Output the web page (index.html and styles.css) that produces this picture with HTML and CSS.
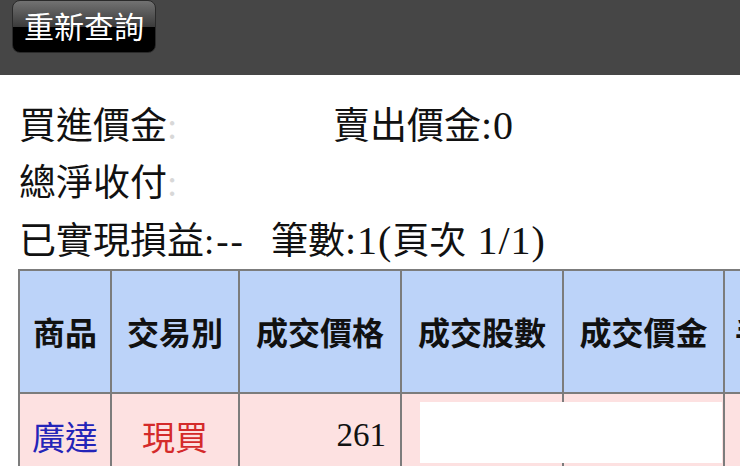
FILE: index.html
```html
<!DOCTYPE html>
<html lang="zh-Hant">
<head>
<meta charset="utf-8">
<title>查詢</title>
<link rel="stylesheet" href="styles.css">
</head>
<body>
<div class="topbar">
  <button class="btn">重新查詢</button>
</div>
<div class="info">
  <div class="line">
    <span class="item-buy">買進價金<span class="faint">:</span></span><span>賣出價金<span class="lat">:0</span></span>
  </div>
  <div class="line">總淨收付<span class="faint">:</span></div>
  <div class="line">已實現損益<span class="wide">:--</span><span class="gap"></span>筆數<span class="lat">:1(</span>頁次<span class="lat"> 1/1)</span></div>
</div>
<div class="table-wrap">
  <table class="grid">
    <thead>
      <tr>
        <th class="c1">商品</th>
        <th class="c2">交易別</th>
        <th class="c3">成交價格</th>
        <th class="c4">成交股數</th>
        <th class="c5">成交價金</th>
        <th class="c6">手續費</th>
      </tr>
    </thead>
    <tbody>
      <tr>
        <td class="name">廣達</td>
        <td class="type">現買</td>
        <td class="num">261</td>
        <td class="num"></td>
        <td class="num"></td>
        <td class="num"></td>
      </tr>
    </tbody>
  </table>
  <div class="mask"></div>
</div>
</body>
</html>
```
FILE: styles.css
```css
html, body {
  margin: 0;
  padding: 0;
  background: #ffffff;
  overflow: hidden;
  width: 740px;
  height: 466px;
}
body {
  font-family: "Liberation Serif", "Noto Sans CJK TC", serif;
  color: #111;
}
.topbar {
  height: 75px;
  background: #464646;
  padding-left: 12px;
  box-sizing: border-box;
}
.btn {
  display: block;
  width: 144px;
  height: 53px;
  margin: 0;
  padding: 0 0 3px 0;
  border: 1px solid #2a2a2a;
  border-radius: 8px;
  background: linear-gradient(to bottom, #727272 0%, #3c3c3c 50%, #000 51%, #000 100%);
  color: #ffffff;
  font-family: "Noto Sans CJK TC", sans-serif;
  font-size: 30px;
  box-sizing: border-box;
}
.info {
  padding: 22px 0 0 19px;
  font-size: 37px;
}
.line {
  height: 57.5px;
  line-height: 57.5px;
  white-space: nowrap;
}
.item-buy {
  display: inline-block;
  width: 314px;
}
.faint {
  color: #d8d8d8;
}
.lat {
  font-size: 40px;
  letter-spacing: 1px;
}
.wide {
  letter-spacing: 2px;
}
.gap {
  display: inline-block;
  width: 26px;
}
.table-wrap {
  position: relative;
  margin: -1px 0 0 18px;
}
.grid {
  border-collapse: collapse;
  table-layout: fixed;
  width: 800px;
}
.grid th, .grid td {
  border: 2px solid #7c7c7c;
  padding: 0 10px;
  white-space: nowrap;
  overflow: hidden;
}
.grid th {
  height: 121px;
  background: #bcd3f9;
  font-family: "Noto Sans CJK TC", sans-serif;
  font-weight: 700;
  font-size: 32px;
  color: #111;
  text-align: center;
}
.grid td {
  height: 84px;
  background: #fde1e1;
  font-size: 33px;
  vertical-align: middle;
}
.c1 { width: 70px; }
.c2 { width: 106px; }
.c3 { width: 140px; }
.c4 { width: 140px; }
.c5 { width: 139px; }
.c6 { width: 120px; text-align: left !important; }
.name {
  font-family: "Noto Sans CJK TC", sans-serif;
  color: #2424b8;
  text-align: center;
}
.type {
  font-family: "Noto Sans CJK TC", sans-serif;
  color: #d42a2a;
  text-align: center;
}
.num {
  text-align: right;
  padding-right: 14px !important;
}
.mask {
  position: absolute;
  left: 402px;
  top: 133px;
  width: 302px;
  height: 61px;
  background: #ffffff;
}
```
